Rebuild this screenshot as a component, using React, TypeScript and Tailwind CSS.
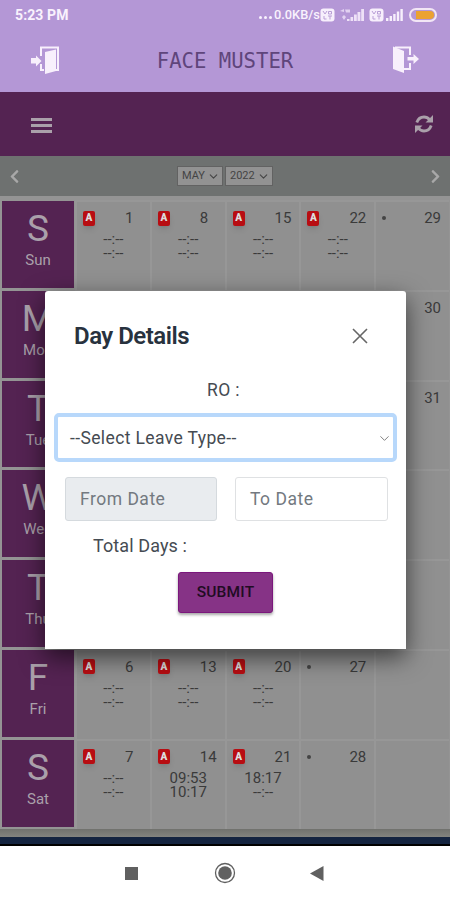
import { ChevronDown } from "lucide-react";
import { FaChevronLeft, FaChevronRight } from "react-icons/fa";

type Day = {
  date: number;
  absent?: boolean;
  times?: string[];
};

const blank = ["--:--", "--:--"];

const weeks: { letter: string; name: string; days: (Day | null)[] }[] = [
  {
    letter: "S",
    name: "Sun",
    days: [
      { date: 1, absent: true, times: blank },
      { date: 8, absent: true, times: blank },
      { date: 15, absent: true, times: blank },
      { date: 22, absent: true, times: blank },
      { date: 29 },
    ],
  },
  { letter: "M", name: "Mon", days: [null, null, null, null, { date: 30 }] },
  { letter: "T", name: "Tue", days: [null, null, null, null, { date: 31 }] },
  { letter: "W", name: "Wed", days: [null, null, null, null, null] },
  { letter: "T", name: "Thu", days: [null, null, null, null, null] },
  {
    letter: "F",
    name: "Fri",
    days: [
      { date: 6, absent: true, times: blank },
      { date: 13, absent: true, times: blank },
      { date: 20, absent: true, times: blank },
      { date: 27 },
      null,
    ],
  },
  {
    letter: "S",
    name: "Sat",
    days: [
      { date: 7, absent: true, times: blank },
      { date: 14, absent: true, times: ["09:53", "10:17"] },
      { date: 21, absent: true, times: ["18:17", "--:--"] },
      { date: 28 },
      null,
    ],
  },
];

const SignalBars = () => (
  <svg width="17" height="12" viewBox="0 0 17 12" fill="#f7effc">
    <rect x="0" y="9" width="2.4" height="3" />
    <rect x="3.6" y="7" width="2.4" height="5" />
    <rect x="7.2" y="5" width="2.4" height="7" />
    <rect x="10.8" y="2.5" width="2.4" height="9.5" />
    <rect x="14.4" y="0" width="2.4" height="12" />
  </svg>
);

const VolteBadge = () => (
  <svg width="15" height="14" viewBox="0 0 15 14">
    <rect x="0.5" y="0.5" width="14" height="13" rx="3" fill="#f7effc" />
    <path d="M3 3l2 3 2-3M8.5 3.5h3v2.5h-3zM4 8v3h2.5M8 8h4M10 8v3.5" fill="none" stroke="#b99fd6" strokeWidth="1" />
  </svg>
);

const DoorIn = () => (
  <svg width="30" height="30" viewBox="0 0 30 30">
    <path d="M11 11V2.500h17V25h-3M11 19v6h3" fill="none" stroke="#f8f0fc" strokeWidth="2" />
    <path d="M15 7L26 4.500V26L15 29z" fill="#f8f0fc" />
    <path d="M1 13h5V10.500l5.500 5.500-5.500 5.500V18.500H1z" fill="#f8f0fc" />
  </svg>
);

const DoorOut = () => (
  <svg width="30" height="30" viewBox="0 0 30 30">
    <path d="M3 1.500L14 6V28L3 24z" fill="#f8f0fc" />
    <path d="M5 2.500h15v7.500M20 18v6h-6" fill="none" stroke="#f8f0fc" strokeWidth="2" />
    <path d="M17.500 12h6V9l5.500 5-5.500 5v-3.500h-6z" fill="#f8f0fc" />
  </svg>
);

const RefreshIcon = () => (
  <svg width="18" height="18" viewBox="0 0 18 18" fill="none" stroke="#aaa0aa" strokeWidth="2.8">
    <path d="M1.800 7.500C3 4 5.800 2 9 2c2.300 0 4.200 1 5.500 2.600M16.200 10.500C15 14 12.200 16 9 16c-2.300 0-4.200-1-5.500-2.600" />
    <path d="M18 0v7.500h-7.500zM0 18v-7.500h7.500z" fill="#aaa0aa" stroke="none" />
  </svg>
);

const StatusBar = () => (
  <div className="flex h-[29px] items-center pl-[15px] pr-[13px] text-[#f9f2fd]">
    <span className="text-[14px] font-bold leading-none tracking-[0.1px]">5:23 PM</span>
    <div className="ml-auto flex items-center">
      <span className="mr-[2px] flex gap-[2px] pt-[6px]">
        <i className="size-[3px] rounded-full bg-[#f9f2fd]" />
        <i className="size-[3px] rounded-full bg-[#f9f2fd]" />
        <i className="size-[3px] rounded-full bg-[#f9f2fd]" />
      </span>
      <span className="w-[46px] whitespace-nowrap pt-px text-[12.800px] font-medium leading-none">0.0KB/s</span>
      <VolteBadge />
      <svg className="ml-[5px]" width="25" height="14" viewBox="0 0 25 14" fill="#eee1f7">
        <path d="M0 3l4-2v3zM5 1.500h5v3H6zM2 9l2-2 2 2-2 3z" opacity=".8" />
        <path d="M7 11h2.500v2H7zM10.500 9h2.600v4h-2.600zM14 6.500h2.800V13H14zM17.500 4h2.900v9h-2.900zM21.200 1H24v12h-2.800z" />
      </svg>
      <span className="ml-[4px]"><VolteBadge /></span>
      <span className="ml-[2px]"><SignalBars /></span>
      <span className="ml-[6px] flex h-[14px] w-[28px] justify-end rounded-full border-2 border-[#f2e6f5] p-px">
        <span className="h-full w-[18px] rounded-r-full bg-[#eba232]" />
      </span>
    </div>
  </div>
);

const DayCell = ({ day }: { day: Day | null }) => (
  <div className="w-[74.800px] shrink-0 border-l-2 border-t-2 border-[#979797] bg-[#909090] pt-[7px] text-[#3a3a3a]">
    {day && (
      <>
        <div className="flex h-[18px] items-center pl-[6px]">
          <div className="w-[42px] shrink-0">
            {day.absent && (
              <span className="flex h-[15px] w-[12px] items-center justify-center rounded-[2px] bg-[#b80d12] text-[10px] font-black leading-none text-[#ddd] shadow-md">
                A
              </span>
            )}
            {!day.absent && day.date < 30 && <span className="block size-[4px] rounded-full bg-[#444]" />}
          </div>
          <span className="pt-px text-[15px] leading-none">{day.date}</span>
        </div>
        {day.times && (
          <div className="pt-[5px] text-center text-[15px] leading-[14px]">
            {day.times.map((time, i) => (
              <div key={i}>{time}</div>
            ))}
          </div>
        )}
      </>
    )}
  </div>
);

const MonthBar = () => (
  <div className="flex h-[40px] items-center justify-between bg-[#6e7170] px-[7px] text-[#a8a8a8]">
    <FaChevronLeft size={15} />
    <div className="flex gap-[2px] text-[11px] text-[#444]">
      <div className="flex h-[20px] w-[46px] items-center justify-between border border-[#626262] bg-[#929292] pl-[4px] pr-[2px]">
        MAY <ChevronDown size={13} strokeWidth={2} />
      </div>
      <div className="flex h-[20px] w-[48px] items-center justify-between border border-[#626262] bg-[#929292] pl-[4px] pr-[2px]">
        2022 <ChevronDown size={13} strokeWidth={2} />
      </div>
    </div>
    <FaChevronRight size={15} />
  </div>
);

const DayDetails = () => (
  <div className="absolute left-[45px] top-[291px] h-[358px] w-[361px] rounded-t-[3px] bg-white px-[9px] text-[#454b52] shadow-[0_8px_24px_rgba(0,0,0,0.6)]">
    <div className="flex h-[89px] items-center justify-between pl-[20px] pr-[29px]">
      <h2 className="text-[24px] font-semibold tracking-[-0.500px] text-[#28323e]">Day Details</h2>
      <svg width="16" height="16" viewBox="0 0 16 16" fill="none" stroke="#666" strokeWidth="1.600">
        <path d="M1 1l14 14M15 1L1 15" />
      </svg>
    </div>
    <div className="h-[33px] pr-[4px] text-center text-[17.500px] leading-[20px] tracking-[0.400px]">RO :</div>
    <div className="flex h-[49px] items-center justify-between rounded-[5px] border-[4px] border-[#b8d8fb] pl-[12px] pr-px pt-px text-[17.500px] tracking-[0.380px]">
      --Select Leave Type--
      <ChevronDown className="text-[#777]" size={15} strokeWidth={1.500} />
    </div>
    <div className="mt-[15px] flex gap-[18px] pl-[11px] text-[17.500px] tracking-[0.500px] text-[#737980]">
      <div className="flex h-[44px] w-[152px] items-center rounded-[3px] border border-[#d5dade] bg-[#e9ecef] pl-[14px] pt-px">From Date</div>
      <div className="flex h-[44px] w-[153px] items-center rounded-[3px] border border-[#dfe1e3] pl-[14px] pt-px">To Date</div>
    </div>
    <div className="pl-[39px] pt-[15px] text-[18px] leading-[20px] tracking-[0.100px]">Total Days :</div>
    <button className="ml-[124px] mt-[16px] h-[41px] w-[95px] rounded-[3px] border border-[#7b177c] bg-[#863386] text-[15.500px] font-medium tracking-[0.200px] text-[#210c23] shadow-[0_2px_3px_rgba(0,0,0,0.35)]">
      SUBMIT
    </button>
  </div>
);

const App = () => (
  <div className="relative flex h-[900px] w-[450px] flex-col overflow-hidden bg-white font-['Roboto',sans-serif]">
    <header className="h-[92px] bg-[#b497d6]">
      <StatusBar />
      <div className="flex h-[62px] items-center justify-between px-[30px]">
        <DoorIn />
        <h1 className="whitespace-nowrap pt-[2px] font-['DejaVu_Sans_Mono',monospace] text-[20.600px] text-[#5f457b]">FACE MUSTER</h1>
        <DoorOut />
      </div>
    </header>

    <nav className="flex h-[64px] items-center justify-between bg-[#542352] pl-[31px] pr-[17px]">
      <div className="flex w-[21px] flex-col gap-[3px] pt-[3px]">
        <span className="h-[3px] bg-[#aaa0aa]" />
        <span className="h-[3px] bg-[#aaa0aa]" />
        <span className="h-[3px] bg-[#aaa0aa]" />
      </div>
      <RefreshIcon />
    </nav>

    <MonthBar />

    <main className="h-[641px] bg-[#949494] pt-[4px]">
      {weeks.map((week) => (
        <div key={week.name} className="flex h-[89.800px] pl-[2px]">
          <div className="mb-[2px] mr-px mt-px flex w-[72px] shrink-0 flex-col items-center bg-[#542352] pt-[9px] text-[#aaa0aa]">
            <span className="text-[37px] leading-[38px]">{week.letter}</span>
            <span className="mt-[3px] text-[15px] leading-[18px]">{week.name}</span>
          </div>
          {week.days.map((day, i) => (
            <DayCell key={i} day={day} />
          ))}
        </div>
      ))}
      <div className="h-[9px] bg-linear-to-b from-[#70716d] to-[#858681]" />
    </main>

    <div className="h-[9px] border-b-2 border-black bg-[#142440]" />

    <footer className="flex h-[54px] items-center bg-white pl-[125px]">
      <span className="size-[13px] bg-[#606060]" />
      <svg className="ml-[76px]" width="22" height="22" viewBox="0 0 22 22">
        <circle cx="11" cy="11" r="9.500" fill="none" stroke="#606060" strokeWidth="1.300" />
        <circle cx="11" cy="11" r="6.800" fill="#606060" />
      </svg>
      <svg className="ml-[74px]" width="14" height="15" viewBox="0 0 14 15" fill="#606060">
        <path d="M0 7.500L13.500 0v15z" />
      </svg>
    </footer>

    <DayDetails />
  </div>
);

export default App;
